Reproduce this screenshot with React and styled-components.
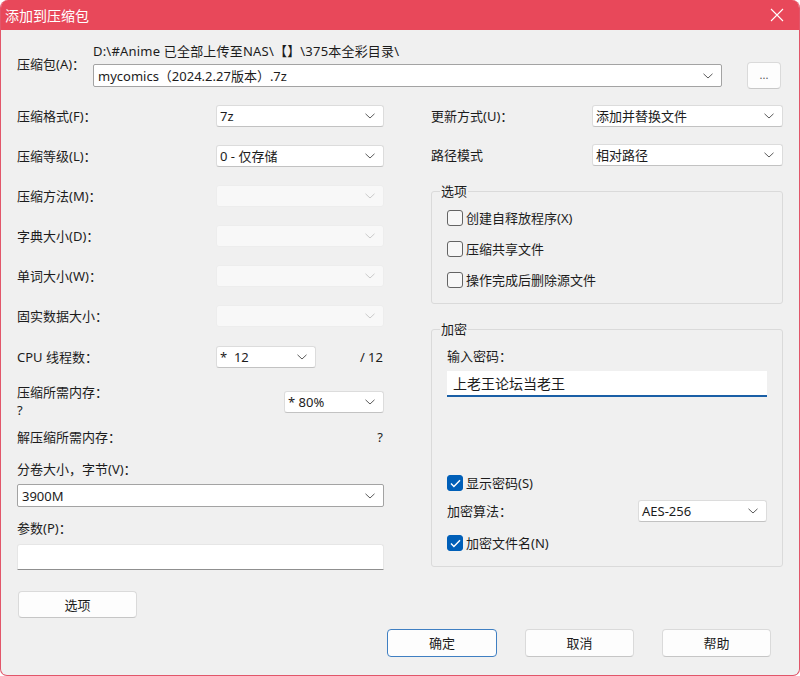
import React from 'react';
import styled, { createGlobalStyle } from 'styled-components';

const Global = createGlobalStyle`
  html, body { margin: 0; padding: 0; background: #ffffff; }
  body {
    font-family: "Noto Sans", "Noto Sans CJK SC", sans-serif;
    font-size: 13px;
    line-height: 18px;
    color: #1c1c1c;
  }
  * { box-sizing: border-box; }
`;

const Window = styled.div`
  width: 800px;
  height: 676px;
  background: #f0f0f0;
  border: 1px solid #e2566a;
  border-top: none;
  border-radius: 8px 8px 7px 7px;
  overflow: hidden;
  display: flex;
  flex-direction: column;
`;

const TitleBar = styled.div`
  height: 30px;
  flex: none;
  background: #e8485a;
  color: #ffffff;
  display: flex;
  align-items: center;
  justify-content: space-between;
  padding-left: 4px;
`;

const Title = styled.span`
  font-size: 14px;
  font-family: "Noto Sans CJK SC", sans-serif;
`;

const CloseButton = styled.div`
  width: 44px;
  height: 30px;
  display: flex;
  align-items: center;
  justify-content: center;
`;

const Body = styled.div`
  flex: 1;
  padding: 0 16px;
  display: flex;
  flex-direction: column;
`;

const ArchiveRow = styled.div`
  display: flex;
  align-items: center;
  margin-top: 12px;
`;

const ArchiveLabel = styled.div`
  width: 76px;
  flex: none;
  margin-top: -4px;
`;

const ArchiveMain = styled.div`
  flex: 1;
  display: flex;
  flex-direction: column;
`;

const PathText = styled.div`
  white-space: nowrap;
  letter-spacing: 0.2px;
`;

const ArchiveInputRow = styled.div`
  display: flex;
  align-items: center;
  gap: 25px;
  margin-right: 2px;
  margin-top: 2px;
`;

const Combo = styled.div`
  width: ${p => (p.$w ? `${p.$w}px` : 'auto')};
  flex: ${p => (p.$fill ? '1' : 'none')};
  height: ${p => p.$h || 22}px;
  display: flex;
  align-items: center;
  justify-content: space-between;
  padding: 0 8px 0 ${p => (p.$edit ? 4 : 3)}px;
  background: ${p => (p.$disabled ? '#f8f8f8' : '#ffffff')};
  border: 1px solid ${p => (p.$disabled ? '#ededed' : p.$edit ? '#a3a3a3' : '#dcdcdc')};
  border-bottom-color: ${p => (p.$disabled ? '#ededed' : p.$edit ? '#a3a3a3' : '#c2c2c2')};
  border-radius: ${p => (p.$edit ? 2 : 3)}px;
  white-space: nowrap;
  margin-top: ${p => p.$mt || 0}px;
`;

const BrowseButton = styled.div`
  width: 34px;
  height: 27px;
  flex: none;
  background: #fdfdfd;
  border: 1px solid #dadada;
  border-bottom-color: #c8c8c8;
  border-radius: 4px;
  display: flex;
  align-items: center;
  justify-content: center;
  font-size: 11px;
  color: #555;
  padding-bottom: 2px;
`;

const Columns = styled.div`
  display: flex;
  align-items: flex-start;
  gap: 47px;
  margin-top: 7px;
`;

const LeftColumn = styled.div`
  width: 367px;
  display: flex;
  flex-direction: column;
`;

const RightColumn = styled.div`
  width: 352px;
  display: flex;
  flex-direction: column;
`;

const FormRow = styled.div`
  height: ${p => p.$h || 40}px;
  display: grid;
  grid-template-columns: ${p => p.$cols};
  align-items: center;
`;

const RightText = styled.div`
  text-align: right;
  padding-right: 1px;
`;

const MemoryRow = styled.div`
  height: 48px;
  padding-top: 5px;
  display: flex;
  justify-content: space-between;
  align-items: flex-start;
`;

const StackLabel = styled.div`
  display: flex;
  flex-direction: column;
`;

const SectionLabel = styled.div`
  margin-top: ${p => p.$mt || 0}px;
`;

const TextInput = styled.div`
  height: 26px;
  margin-top: ${p => p.$mt || 0}px;
  background: #ffffff;
  border: 1px solid #e6e6e6;
  border-bottom-color: #8f8f8f;
  border-radius: 3px 3px 0 0;
`;

const PasswordInput = styled.div`
  height: 26px;
  margin-top: 6px;
  background: #ffffff;
  border-bottom: 2px solid #1a5fa6;
  display: flex;
  align-items: center;
  padding-left: 6px;
  font-size: 14px;
  font-family: "Noto Sans CJK SC", sans-serif;
`;

const PushButton = styled.div`
  width: ${p => p.$w}px;
  height: ${p => p.$h || 28}px;
  margin-top: ${p => p.$mt || 0}px;
  margin-left: ${p => p.$ml || 0}px;
  background: #fdfdfd;
  border: 1px solid ${p => (p.$primary ? '#3f7fc2' : '#dadada')};
  border-bottom-color: ${p => (p.$primary ? '#3f7fc2' : '#c6c6c6')};
  border-radius: 4px;
  display: flex;
  align-items: center;
  justify-content: center;
  font-family: "Noto Sans CJK SC", sans-serif;
`;

const Group = styled.fieldset`
  margin: ${p => p.$mt || 0}px 0 0 0;
  padding: 0 15px ${p => p.$pb || 8}px 8px;
  border: 1px solid #dadada;
  border-radius: 3px;
  min-width: 0;
`;

const Legend = styled.legend`
  padding: 0 1px;
  line-height: 18px;
`;

const GroupInner = styled.div`
  padding-left: 7px;
  display: flex;
  flex-direction: column;
`;

const CheckRow = styled.label`
  height: ${p => p.$h || 31}px;
  display: flex;
  align-items: center;
  gap: 3px;
`;

const Box = styled.span`
  width: 16px;
  height: 16px;
  flex: none;
  border-radius: 3px;
  border: 1px solid ${p => (p.$checked ? '#005fb8' : '#646464')};
  background: ${p => (p.$checked ? '#005fb8' : '#f7f7f7')};
  display: flex;
  align-items: center;
  justify-content: center;
`;

const Spacer = styled.div`
  height: ${p => p.$h}px;
`;

const Footer = styled.div`
  display: flex;
  justify-content: flex-end;
  gap: 28px;
  margin-top: 11px;
  margin-right: 12px;
`;

const Chevron = ({ disabled }) => (
  <svg width="10" height="6" viewBox="0 0 10 6">
    <path d="M0.5 0.8 L5 5 L9.5 0.8" fill="none" stroke={disabled ? '#c9c9c9' : '#5a5a5a'} strokeWidth="1" />
  </svg>
);

const Select = ({ children, disabled, ...rest }) => (
  <Combo $disabled={disabled} {...rest}>
    <span>{children}</span>
    <Chevron disabled={disabled} />
  </Combo>
);

const CheckBox = ({ checked, children, h }) => (
  <CheckRow $h={h}>
    <Box $checked={checked}>
      {checked && (
        <svg width="11" height="9" viewBox="0 0 11 9">
          <path d="M1 4.6 L3.9 7.4 L10 1.2" fill="none" stroke="#ffffff" strokeWidth="1.4" />
        </svg>
      )}
    </Box>
    <span>{children}</span>
  </CheckRow>
);

const leftRows = [
  { label: '压缩格式(F)：', value: '7z' },
  { label: '压缩等级(L)：', value: '0 - 仅存储' },
  { label: '压缩方法(M)：', disabled: true },
  { label: '字典大小(D)：', disabled: true },
  { label: '单词大小(W)：', disabled: true },
  { label: '固实数据大小：', disabled: true },
];

export default function App() {
  return (
    <>
      <Global />
      <Window>
        <TitleBar>
          <Title>添加到压缩包</Title>
          <CloseButton>
            <svg width="14" height="14" viewBox="0 0 14 14">
              <path d="M1 1 L13 13 M13 1 L1 13" stroke="#ffffff" strokeWidth="1.1" />
            </svg>
          </CloseButton>
        </TitleBar>
        <Body>
          <ArchiveRow>
            <ArchiveLabel>压缩包(A)：</ArchiveLabel>
            <ArchiveMain>
              <PathText>D:\#Anime 已全部上传至NAS\【】\375本全彩目录\</PathText>
              <ArchiveInputRow>
                <Select $fill $edit $h={23}>mycomics（2024.2.27版本）.7z</Select>
                <BrowseButton>...</BrowseButton>
              </ArchiveInputRow>
            </ArchiveMain>
          </ArchiveRow>

          <Columns>
            <LeftColumn>
              {leftRows.map(r => (
                <FormRow key={r.label} $cols="199px 168px">
                  <span>{r.label}</span>
                  <Select disabled={r.disabled}>{r.value || ''}</Select>
                </FormRow>
              ))}
              <FormRow $h={42} $cols="199px 100px 68px">
                <span>CPU 线程数：</span>
                <Select>*&nbsp; 12</Select>
                <RightText>/ 12</RightText>
              </FormRow>
              <MemoryRow>
                <StackLabel>
                  <span>压缩所需内存：</span>
                  <span>?</span>
                </StackLabel>
                <Select $w={100} $mt={8}>* 80%</Select>
              </MemoryRow>
              <FormRow $h={22} $cols="1fr auto">
                <span>解压缩所需内存：</span>
                <RightText>?</RightText>
              </FormRow>
              <SectionLabel $mt={12}>分卷大小，字节(V)：</SectionLabel>
              <Select $edit $h={23} $mt={6}>3900M</Select>
              <SectionLabel $mt={12}>参数(P)：</SectionLabel>
              <TextInput $mt={7} />
              <PushButton $w={119} $h={27} $mt={21} $ml={1}>选项</PushButton>
            </LeftColumn>

            <RightColumn>
              <FormRow $cols="161px 191px">
                <span>更新方式(U)：</span>
                <Select>添加并替换文件</Select>
              </FormRow>
              <FormRow $h={38} $cols="161px 191px">
                <span>路径模式</span>
                <Select>相对路径</Select>
              </FormRow>
              <Group $mt={8}>
                <Legend>选项</Legend>
                <GroupInner>
                  <Spacer $h={2} />
                  <CheckBox>创建自释放程序(X)</CheckBox>
                  <CheckBox>压缩共享文件</CheckBox>
                  <CheckBox>操作完成后删除源文件</CheckBox>
                </GroupInner>
              </Group>
              <Group $mt={16} $pb={6}>
                <Legend>加密</Legend>
                <GroupInner>
                  <SectionLabel $mt={9}>输入密码：</SectionLabel>
                  <PasswordInput>上老王论坛当老王</PasswordInput>
                  <Spacer $h={73} />
                  <CheckBox checked h={26}>显示密码(S)</CheckBox>
                  <FormRow $h={30} $cols="191px 129px">
                    <span>加密算法：</span>
                    <Select>AES-256</Select>
                  </FormRow>
                  <CheckBox checked h={34}>加密文件名(N)</CheckBox>
                </GroupInner>
              </Group>
            </RightColumn>
          </Columns>

          <Footer>
            <PushButton $w={110} $primary>确定</PushButton>
            <PushButton $w={109}>取消</PushButton>
            <PushButton $w={109}>帮助</PushButton>
          </Footer>
        </Body>
      </Window>
    </>
  );
}
